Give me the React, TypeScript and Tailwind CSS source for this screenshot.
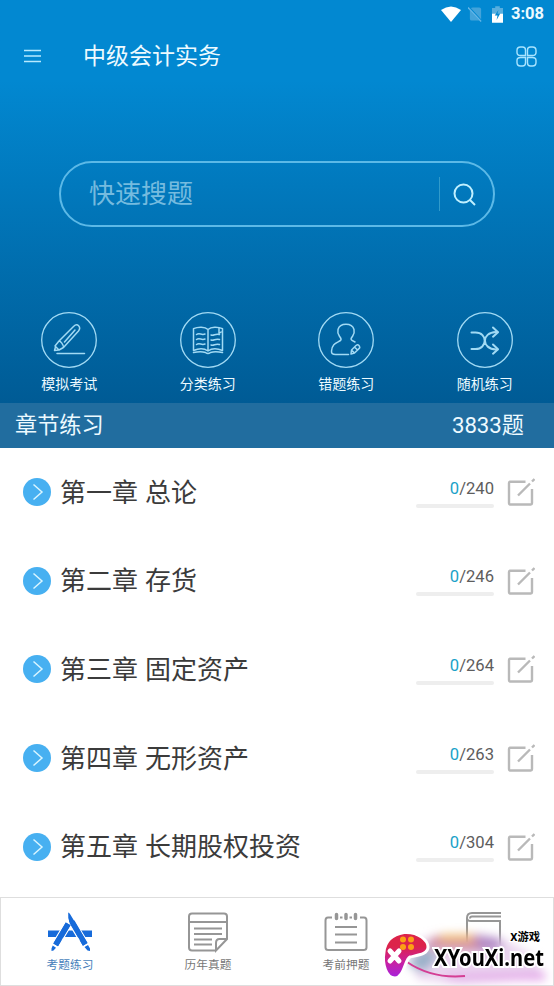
import type { ReactNode } from 'react';

interface Entry {
  label: string;
  icon: ReactNode;
}

const chapters = [
  { title: '第一章 总论', total: 240 },
  { title: '第二章 存货', total: 246 },
  { title: '第三章 固定资产', total: 264 },
  { title: '第四章 无形资产', total: 263 },
  { title: '第五章 长期股权投资', total: 304 },
];

const actions: Entry[] = [
  {
    label: '模拟考试',
    icon: (
      <g strokeWidth={1.5}>
        <path d="M18 29 32.500 14.500c4-4 8 .5 5 4.500L22.500 35.500 18 38l-4-4zM18 29c1.500 0 4.500 3.500 4.500 6.500M23.500 30 34 18M14.500 35 13.500 38.500l4-.5" />
        <path d="M16 41.500h27.500" />
      </g>
    ),
  },
  {
    label: '分类练习',
    icon: (
      <g strokeWidth={1.5}>
        <path d="M28 17.500c-3-3-10-3-14.500-.8V38.500c5-2 11-2 14.500.5 3.500-2.500 9.500-2.500 14.500-.5V16.700c-4.500-2.200-11.500-2.200-14.500.8zM28 17.500v21M39 16v5.500l2-1.500" />
        <path d="M16.500 22.500c3-2 5 1 8.500-.5m-8.500 5.500c3-2 5 1 8.500-.5m-8.500 5.500c3-2 5 1 8.500-.5M31 23c3 1 4.500-2 8.500-.5M31 28c3 1 4.500-2 8.500-.5M31 33c3 1 4.500-2 8.500-.5M13.500 40.500c5-1 9-1 12 0 1.500 1.200 3.500 1.200 5 0 3-1 7-1 12 0" />
      </g>
    ),
  },
  {
    label: '错题练习',
    icon: (
      <g strokeWidth={1.5}>
        <path d="M30.500 42.500H17.500c-3 0-4.200-1-4-3.500.7-7.500 5-8 9-10.500 1.300-1 .5-2-.5-3.500-1.500-2.200-3-3.500-2-7.500C21 14 24 12.300 28 12.300s7 1.700 8 5.200c1 4-.5 5.300-2 7.500-1 1.500-1.500 2.500 0 3.300l3 1.700" />
        <path d="m33.500 38 4.500-4.500q2-1.500 3.200.3t-.2 2.800L36.500 41l-3.500 1zM36.500 35l3 3M33.500 38l3 3" />
      </g>
    ),
  },
  {
    label: '随机练习',
    icon: (
      <g strokeWidth={2}>
        <path d="M14.500 20.500h4c12.500 0 12 16.500 0 16.500h-4M40.500 20H39C24 20.500 24.500 37 39 37.500h1.500" />
        <path d="m36 15.500 5 4.700-5 4.500M36 32.500l5 4.700-5 4.500" />
      </g>
    ),
  },
];

const tabs: Entry[] = [
  {
    label: '考题练习',
    icon: (
      <g stroke="none" fill="#176bda">
        <path d="M0 18.500h44v6.500H0z" />
        <g stroke="#fff" strokeWidth="2.500">
          <path d="m17.800 10.500 4.700 2.700L10 34.300l-4.700-2.700z" />
          <path d="M20.200.5q1 0 1.800 1.500L39.500 31l-4.600 2.700-13-22Q19.500 6 20.200.5z" />
        </g>
        <path d="m17.800 10.500 4.700 2.700L10 34.300l-4.700-2.700z" />
        <path d="M20.200.5q1 0 1.800 1.500L39.500 31l-4.600 2.700-13-22Q19.500 6 20.200.5z" />
        <path d="M11.500 25.500h22l1.500 3H10z" fill="#fff" />
        <path d="m17.800 10.500 4.700 2.700L10 34.300l-4.700-2.700zM21 9l5.500-.5L39.500 31l-4.600 2.700zM4.700 33.500 8 35.700 5.500 38.500 3.500 39v-2.500zM36.500 35l3.500-2 2 3.500v2.500l-2.500-.5z" />
      </g>
    ),
  },
  {
    label: '历年真题',
    icon: (
      <path d="M30 38.500H6Q3 38.500 3 35.500V4.500Q3 1.500 6 1.500h32q3 0 3 3V27L30 38.500V31q0-4 3.500-4H41M3 10h38M8 16.500h28M8 22h28M8 27.500h18M8 32.500h18" />
    ),
  },
  {
    label: '考前押题',
    icon: (
      <>
        <path d="M8 5.500H4Q1.500 5.500 1.500 8.500v27q0 2.500 3 2.500h35q3 0 3-2.500v-27q0-3-2.500-3h-4M16 5.500h2.500M25.500 5.500H28" />
        <path d="M11 15h22M11 22.500h22M11 30.500h22" />
        <path strokeWidth={3.5} strokeLinecap="round" d="M12.500 2.500v4M22 2.500v4M31.500 2.500v4" />
      </>
    ),
  },
  {
    label: '',
    icon: <path d="M5 30V6Q5 1 10 1h29M5 6q0 3 4 3h29v24M39 4.500H10Q8 4.500 8 6.500" />,
  },
];

function StatusBar() {
  return (
    <div className="flex h-7 items-center justify-end pr-[10px]">
      <svg className="mr-[7px] h-4 w-5" viewBox="0 0 20 16" fill="#fff">
        <path d="M0 4Q10-3 20 4L10 16z" />
      </svg>
      <svg className="mr-[9px] h-[17px] w-[15px]" viewBox="0 0 16 17">
        <path d="m3 1.500 11 12V3q0-2-2-2H5zM2 4v9q0 2 2 2h8z" fill="#43a3da" />
        <path d="m0 1 14 15" stroke="#64b5e6" strokeWidth="1.500" />
      </svg>
      <svg className="mr-2 h-[17px] w-[11px]" viewBox="0 0 12 18">
        <path d="M3.500 0h5v2H12v6H0V2h3.500z" fill="#58aede" />
        <path d="M0 8h12v10H0z" fill="#fff" />
        <path d="M7 4 3 10h3l-1 5 4-7H6z" fill="#0288d1" />
      </svg>
      <span className="text-[16.500px] font-bold leading-none">3:08</span>
    </div>
  );
}

function ChapterRow({ title, total }: { title: string; total: number }) {
  return (
    <li className="flex h-[88.6px] items-center pl-[23px] pr-[19px]">
      <svg className="size-7 shrink-0" viewBox="0 0 28 28" fill="none">
        <circle cx="14" cy="14" r="14" fill="#47b0f1" />
        <path d="m10.500 6.500 8.500 7.500-8.500 7.500" stroke="#d9f5ff" strokeWidth="1.500" />
      </svg>
      <span className="ml-[9px] mt-px flex-1 whitespace-nowrap text-[26px] leading-none text-[#3b3b3b] [word-spacing:0.600px]">{title}</span>
      <div className="mt-[2px] w-[78px]">
        <p className="text-right text-[16.6px] leading-5 text-[#5d5d5d]">
          <span className="text-[#1ba2c8]">0</span>/{total}
        </p>
        <div className="mt-[5px] h-1 rounded-sm bg-[#eee]" />
      </div>
      <svg className="ml-[13px] size-7" viewBox="0 0 28 28" fill="none" stroke="#b9b9b9" strokeWidth="2.400">
        <path d="M18.500 3.700H3.200Q2 3.700 2 5v20.300q0 1.200 1.200 1.200h20.600q1.200 0 1.200-1.200V11" />
        <path d="M11 17.500 23 5.500M25 3.500 27.500 1" />
      </svg>
    </li>
  );
}

function Watermark() {
  return (
    <div className="absolute bottom-0 right-0 h-[62px] w-[176px] overflow-hidden">
      <svg className="absolute inset-0 size-full" viewBox="0 0 176 62">
        <defs>
          <filter id="haze" x="-20%" y="-40%" width="140%" height="180%">
            <feGaussianBlur stdDeviation="5" />
          </filter>
          <linearGradient id="pad" x1="0" y1="0" x2="0" y2="1">
            <stop offset="0.300" stopColor="#dc234a" />
            <stop offset="0.650" stopColor="#c921a0" />
            <stop offset="1" stopColor="#a522df" />
          </linearGradient>
        </defs>
        <g filter="url(#haze)">
          <path d="M30 20q45-13 95-5l35 20 5 20-80 7-45-6z" fill="#ead5ef" />
          <path d="M55 14q42-8 66 4l-8 11-65-3z" fill="#d08da6" />
          <path d="M65 11h33l-4 8H61z" fill="#f0bd80" />
          <path d="m30 41 16-16 17 8-17 17z" fill="#9ab1c9" />
          <path d="m62 52 106-3v8H75z" fill="#e3a3e8" />
          <path d="m98 12 24 3 4 11-23 2z" fill="#b28ac6" />
        </g>
        <path d="M30 39Q55 56 88 53" fill="none" stroke="#d43e94" strokeWidth="2" />
        <path d="M27 9.500C42 8.500 51 18 51 24c0 7-9 8-18 10-5 2-6 21-15 21C9 55 5 41 7 29 8 18 15 11.500 27 9.500z" fill="url(#pad)" stroke="#fff" strokeWidth="3" />
        <g fill="#fca015">
          <circle cx="26" cy="16.500" r="3" />
          <circle cx="34" cy="16.500" r="3" />
          <circle cx="26" cy="24" r="3" />
          <circle cx="34" cy="24" r="3" />
        </g>
        <path d="m13 28 9 10m0-10-9 10" stroke="#fff" strokeWidth="5" strokeLinecap="round" />
      </svg>
      <div className="absolute inset-0 flex flex-col pt-[9px] font-bold text-black [paint-order:stroke_fill]">
        <span className="self-end pr-[13px] text-[11.300px] leading-[12px] [-webkit-text-stroke:2px_white]">X游戏</span>
        <span className="ml-[57px] origin-left scale-x-[0.840] font-['Noto_Sans'] text-[24px] leading-[25px] [-webkit-text-stroke:4px_white]">XYouXi.net</span>
      </div>
    </div>
  );
}

export default function App() {
  return (
    <div className="flex h-[986px] w-[554px] flex-col overflow-hidden bg-white font-[Roboto,'Noto_Sans_CJK_SC',sans-serif]">
      <header className="h-[403px] bg-linear-to-b from-[#0288d1] from-20% to-[#005b95] text-[#edfaff]">
        <StatusBar />
        <div className="flex h-14 items-center pl-6 pr-[17px]">
          <svg className="h-3.5 w-[17px]" viewBox="0 0 17 14" stroke="#b8eaff" strokeWidth="1.700">
            <path d="M0 1.500h17M0 7h17M0 12.500h17" />
          </svg>
          <h1 className="ml-[42px] mt-px flex-1 text-[23px] leading-none">中级会计实务</h1>
          <svg className="size-[21px]" viewBox="0 0 21 21" fill="none" stroke="#a9e4ff" strokeWidth="1.400">
            <path d="M4.500 1h2Q9.500 1 9.500 4v5.500h-5q-3.500 0-3.500-3v-2Q1 1 4.500 1zM14.500 1h2Q20 1 20 4.500v2q0 3-3.500 3h-5V4q0-3 3-3zM4.500 11.500h5V17q0 3-3 3h-2Q1 20 1 16.500v-2q0-3 3.500-3zM11.500 11.500h5q3.500 0 3.500 3v2q0 3.500-3.500 3.500h-2q-3 0-3-3z" />
          </svg>
        </div>

        {/* Search */}
        <div className="mx-[59px] mt-[77px] flex h-[66px] w-[436px] items-center rounded-full border-2 border-[#5cb9e7] pl-[28px] pr-[17px]">
          <span className="flex-1 text-[26px] leading-none text-[#75bbdf]">快速搜题</span>
          <span className="h-[34px] w-px bg-[#319bcb]" />
          <svg className="ml-[13px] size-[23px]" viewBox="0 0 23 23" fill="none" stroke="#c0f0ff" strokeWidth="2">
            <circle cx="10.500" cy="10.500" r="9" />
            <path d="m17 17 5 5" />
          </svg>
        </div>

        <div className="mt-[85px] grid grid-cols-4">
          {actions.map((action) => (
            <div key={action.label} className="flex flex-col items-center">
              <svg className="size-14" viewBox="0 0 56 56" fill="none" stroke="#a1daf4" strokeLinecap="round" strokeLinejoin="round">
                <circle cx="28" cy="28" r="27.300" strokeWidth="1.300" />
                {action.icon}
              </svg>
              <span className="mt-[6px] text-[14px] leading-5">{action.label}</span>
            </div>
          ))}
        </div>
      </header>

      <div className="flex h-[45px] items-center justify-between bg-[#216d9f] pl-[15px] pr-[30px] text-[22.200px] leading-none text-[#edfaff]">
        <span>章节练习</span>
        <span>3833题</span>
      </div>

      <ul className="h-[449px]">
        {chapters.map((chapter) => (
          <ChapterRow key={chapter.title} {...chapter} />
        ))}
      </ul>

      <nav className="relative grid h-[89px] grid-cols-4 border border-[#dedede] bg-white pt-[14px]">
        {tabs.map((tab, i) => (
          <div key={i} className="flex flex-col items-center">
            <svg className="h-[42px] w-[44px]" viewBox="0 0 44 42" fill="none" stroke="#969696" strokeWidth="2">
              {tab.icon}
            </svg>
            <span className={`mt-[3px] text-[11.700px] leading-4 ${i === 0 ? 'text-[#487fbb]' : 'text-[#777]'}`}>{tab.label}</span>
          </div>
        ))}
        <Watermark />
      </nav>
    </div>
  );
}
